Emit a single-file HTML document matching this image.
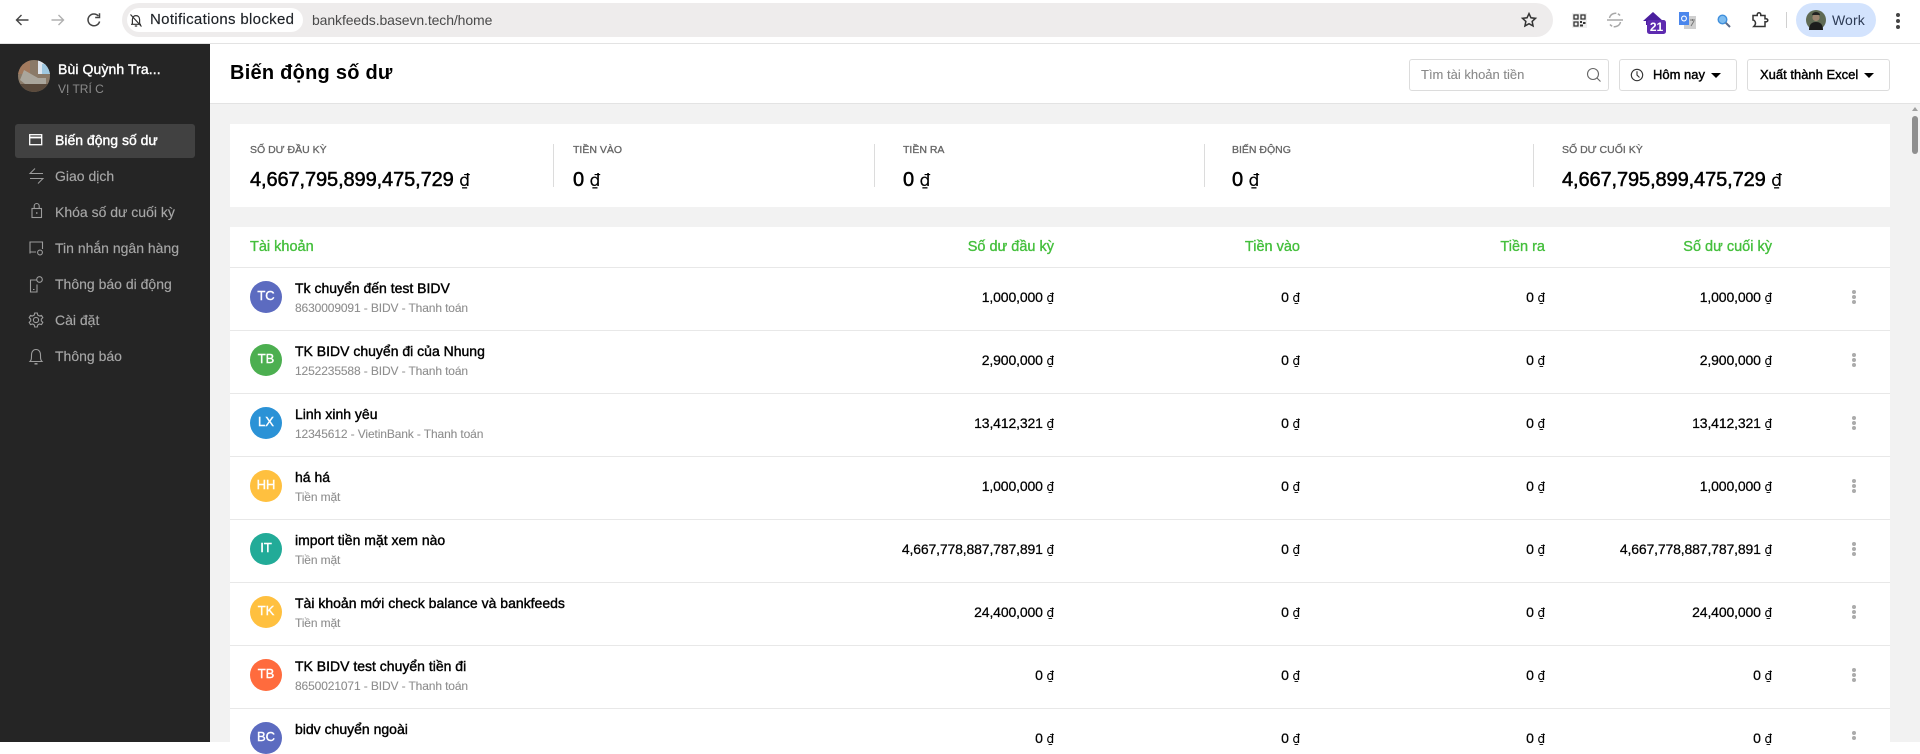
<!DOCTYPE html>
<html lang="vi"><head><meta charset="utf-8"><title>Biến động số dư</title>
<style>
*{box-sizing:border-box;margin:0;padding:0}
html,body{width:1920px;height:742px;overflow:hidden;background:#fff;font-family:"Liberation Sans",Arial,sans-serif;color:#000}
.a{position:absolute;white-space:nowrap}
svg{position:absolute;overflow:visible}
.m{-webkit-text-stroke:.4px currentColor}
i{font-style:normal;font-family:"DejaVu Sans",sans-serif;font-size:.86em;-webkit-text-stroke:.1px currentColor}
.nav{left:55px;font-size:14px;line-height:20px;color:#a6a6a6;-webkit-text-stroke:.15px #a6a6a6}
.lbl{font-size:10.5px;line-height:14px;color:#666;-webkit-text-stroke:.3px #666;top:143px}
.val{font-size:20px;line-height:28px;top:166px;letter-spacing:-.1px;-webkit-text-stroke:.5px #000}
.sep{position:absolute;top:144px;width:1px;height:43px;background:#dcdcdc}
.th{top:237px;font-size:14.5px;line-height:20px;color:#44bf3c;-webkit-text-stroke:.35px #44bf3c}
.row{position:absolute;left:230px;width:1660px;height:1px;background:#e8e8e8}
.av{position:absolute;left:250px;width:32px;height:32px;border-radius:50%;color:#fff;font-size:13px;line-height:30px;text-align:center;-webkit-text-stroke:.4px #fff}
.nm{left:295px;font-size:14px;line-height:20px;-webkit-text-stroke:.4px #000}
.sb{left:295px;font-size:12px;line-height:16px;color:#8e8e8e;letter-spacing:-.12px;-webkit-text-stroke:.1px #8e8e8e}
.v{font-size:14px;line-height:20px;letter-spacing:-.15px;-webkit-text-stroke:.25px #000}
.dot{position:absolute;left:1852px;width:4px;height:4px;border-radius:50%;background:#ababab}
.btn{position:absolute;top:59px;height:32px;border:1px solid #dcdcdc;border-radius:3px;background:#fff}
.car{position:absolute;width:0;height:0;border-left:5px solid transparent;border-right:5px solid transparent;border-top:5px solid #000}
</style></head><body>

<!-- Browser chrome -->
<div class="a" style="left:0;top:0;width:1920px;height:43px;background:#fff"></div>
<div class="a" style="left:0;top:43px;width:1920px;height:1px;background:#e3e3e3"></div>
<svg style="left:14px;top:12px" width="16" height="16" fill="none" stroke="#444" stroke-width="1.4"><path d="M14.500 8H2.500M7.500 3 2.500 8l5 5"/></svg>
<svg style="left:50px;top:12px" width="16" height="16" fill="none" stroke="#b0b0b0" stroke-width="1.4"><path d="M1.500 8h12M8.500 3l5 5-5 5"/></svg>
<svg style="left:86px;top:12px" width="16" height="16" fill="none" stroke="#444" stroke-width="1.5"><path d="M13.600 9.500A5.900 5.900 0 1 1 12.400 4"/><path d="M13.500 1.200v4.300H9.200" /></svg>
<div class="a" style="left:122px;top:3px;width:1431px;height:34px;border-radius:17px;background:#eeecec"></div>
<div class="a" style="left:127px;top:8px;width:176px;height:24px;border-radius:12px;background:#fff"></div>
<svg style="left:129px;top:13px" width="14" height="15" fill="none" stroke="#333" stroke-width="1.2"><path d="M3.400 11V6.500C3.400 4 5 2.600 7 2.600s3.600 1.400 3.600 3.900V11M2 11.300h10M5.800 13h2.400M1.500 1.500l11 12"/></svg>
<div class="a" style="left:150px;top:10px;font-size:15px;line-height:20px;color:#1f2328;letter-spacing:.32px;-webkit-text-stroke:.15px #1f2328">Notifications blocked</div>
<div class="a" style="left:312px;top:10px;font-size:14px;line-height:20px;color:#4a4a4a;letter-spacing:-.1px">bankfeeds.basevn.tech/home</div>
<svg style="left:1521px;top:12px" width="16" height="16" fill="none" stroke="#333" stroke-width="1.5"><path d="M8 1.600l1.950 4.200 4.550.55-3.350 3.100.9 4.500L8 11.700l-4.050 2.250.9-4.500L1.500 6.350l4.550-.55z"/></svg>
<!-- extensions -->
<svg style="left:1572px;top:13px" width="15" height="15"><rect width="15" height="15" fill="#efefef"/><path d="M2 2h4v4H2zM9 2h4v4H9zM2 9h4v4H2z" fill="none" stroke="#333" stroke-width="1.3"/><path d="M8 8h2v2H8zM11 9h2.500v2H11zM8 11.500h3V13.500H8z" fill="#333"/></svg>
<svg style="left:1607px;top:12px" width="16" height="16" fill="none" stroke="#a8a8a8" stroke-width="1.5"><path d="M2.500 6A6 6 0 0 1 13 3.500M13.500 10A6 6 0 0 1 3 12.500" stroke-dasharray="9 1.500"/><path d="M0 8h16"/></svg>
<svg style="left:1643px;top:12px" width="23" height="22"><path d="M0 9 10 0l10 9h-3v4H3V9z" fill="#4a1f9e"/><rect x="4" y="8" width="19" height="14" rx="2.500" fill="#5e2bb0"/></svg>
<div class="a" style="left:1647px;top:20px;width:19px;text-align:center;color:#fff;font-size:12px;line-height:14px;font-weight:bold">21</div>
<svg style="left:1679px;top:12px" width="17" height="17"><rect x="5" y="4" width="12" height="13" fill="#cfcfcf"/><rect width="10" height="13" fill="#4a86ec"/><circle cx="5" cy="6.500" r="2.400" fill="none" stroke="#fff" stroke-width="1.1"/><path d="M11 8h5M13.500 7v2M12 14l3-5" stroke="#777" fill="none"/></svg>
<svg style="left:1717px;top:14px" width="14" height="14"><circle cx="5.500" cy="5.500" r="4.300" fill="#7fbdf0" stroke="#3f8fdc" stroke-width="1.4"/><path d="M8.800 8.800l4.200 4.200" stroke="#5a6a88" stroke-width="2"/></svg>
<svg style="left:1752px;top:12px" width="17" height="16" fill="none" stroke="#333" stroke-width="1.5"><path d="M1 3.500h4.200C5 1.500 6 .8 7 .8s2 .7 1.800 2.700h4.200v3.300c1.800-.3 2.800.5 2.800 1.500s-1 1.800-2.800 1.500v4.700H1.800c1.100-1.100 1.700-2 1.700-3.300S2.500 8 1 8z"/></svg>
<div class="a" style="left:1786px;top:12px;width:1px;height:16px;background:#d0d0d0"></div>
<div class="a" style="left:1796px;top:3px;width:80px;height:34px;border-radius:17px;background:#d3e3fd"></div>
<svg style="left:1806px;top:10px" width="20" height="20"><circle cx="10" cy="10" r="10" fill="#5f6a54"/><circle cx="10" cy="7.500" r="3.600" fill="#9c8470"/><path d="M6 5a4 3 0 0 1 8 0z" fill="#222"/><path d="M3 20c0-6 3-8 7-8s7 2 7 8z" fill="#1c1c1c"/></svg>
<div class="a" style="left:1832px;top:10px;font-size:14px;line-height:20px;color:#2d3b55;letter-spacing:.1px">Work</div>
<div class="dot" style="left:1896px;top:13px;background:#444"></div><div class="dot" style="left:1896px;top:19px;background:#444"></div><div class="dot" style="left:1896px;top:25px;background:#444"></div>

<!-- Sidebar -->
<div class="a" style="left:0;top:44px;width:210px;height:698px;background:#252525"></div>
<svg style="left:18px;top:60px" width="32" height="32"><defs><clipPath id="c"><circle cx="16" cy="16" r="16"/></clipPath></defs><g clip-path="url(#c)"><rect width="32" height="32" fill="#8a7a68"/><rect x="20" y="0" width="12" height="14" fill="#dfe6ee"/><rect x="24" y="4" width="8" height="10" fill="#9fc8e0"/><rect x="0" y="0" width="12" height="14" fill="#a27a5e"/><path d="M6 10l14 8 8 0 0 6-16 4-10-8z" fill="#aaa69c"/><rect x="0" y="24" width="32" height="8" fill="#5a4a3c"/></g></svg>
<div class="a m" style="left:58px;top:59px;font-size:14px;line-height:20px;color:#fff;letter-spacing:.1px">Bùi Quỳnh Tra...</div>
<div class="a" style="left:58px;top:81px;font-size:12px;line-height:16px;color:#8b8b8b">VỊ TRÍ C</div>

<div class="a" style="left:15px;top:124px;width:180px;height:34px;border-radius:3px;background:#414141"></div>
<svg style="left:29px;top:134px" width="15" height="12" fill="none" stroke="#fff" stroke-width="1.3"><rect x=".7" y=".7" width="12" height="10"/><path d="M.7 3.500h12" stroke-width="1.8"/></svg>
<div class="a nav m" style="top:130px;color:#fff;-webkit-text-stroke:.4px #fff">Biến động số dư</div>
<svg style="left:29px;top:167px" width="15" height="18" fill="none" stroke="#9c9c9c" stroke-width="1"><path d="M14 6.500H1L6 1.500M1 11.500h13l-5 5"/></svg>
<div class="a nav" style="top:166px">Giao dịch</div>
<svg style="left:31px;top:202px" width="12" height="17" fill="none" stroke="#9c9c9c" stroke-width="1.1"><rect x="1" y="6.500" width="9.500" height="9"/><path d="M3.200 6.500V4a2.500 2.500 0 0 1 5 0v2.500"/><path d="M5.800 10v2"/></svg>
<div class="a nav" style="top:202px">Khóa số dư cuối kỳ</div>
<svg style="left:29px;top:241px" width="15" height="15" fill="none" stroke="#9c9c9c" stroke-width="1.1"><path d="M1 12.500V1h12.500v7M1 11h6"/><circle cx="11" cy="11.500" r="2.400"/></svg>
<div class="a nav" style="top:238px">Tin nhắn ngân hàng</div>
<svg style="left:29px;top:276px" width="15" height="17" fill="none" stroke="#9c9c9c" stroke-width="1.1"><path d="M8 4H1.500v12H8V8.500M4 13.500h1.500"/><circle cx="10.500" cy="3.500" r="2.800"/></svg>
<div class="a nav" style="top:274px">Thông báo di động</div>
<svg style="left:28px;top:312px" width="16" height="16" fill="none" stroke="#9c9c9c" stroke-width="1.1"><path d="M6.700 1h2.600l.4 2 1.800 1 2-.6 1.300 2.300-1.500 1.400v1.800l1.500 1.400-1.300 2.300-2-.6-1.800 1-.4 2H6.700l-.4-2-1.800-1-2 .6L1.200 10.300l1.500-1.400V7.100L1.200 5.700 2.500 3.400l2 .6 1.800-1z"/><circle cx="8" cy="8" r="2.600"/></svg>
<div class="a nav" style="top:310px">Cài đặt</div>
<svg style="left:29px;top:348px" width="14" height="17" fill="none" stroke="#9c9c9c" stroke-width="1.1"><path d="M1 13.500c1.500-1.500 1.500-3 1.500-6.500C2.500 3.500 4.500 1.500 7 1.500s4.500 2 4.500 5.500c0 3.500 0 5 1.500 6.500z"/><path d="M5.500 15.800h3" stroke-width="1.5"/></svg>
<div class="a nav" style="top:346px">Thông báo</div>

<!-- Header -->
<div class="a" style="left:210px;top:44px;width:1710px;height:59px;background:#fff"></div>
<div class="a" style="left:210px;top:103px;width:1710px;height:1px;background:#e3e3e3"></div>
<div class="a" style="left:230px;top:59px;font-size:20px;line-height:28px;font-weight:bold;letter-spacing:.25px">Biến động số dư</div>
<div class="btn" style="left:1409px;width:200px"></div>
<div class="a" style="left:1421px;top:65px;font-size:13px;line-height:20px;color:#8a8a8a;-webkit-text-stroke:.1px #8a8a8a">Tìm tài khoản tiền</div>
<svg style="left:1586px;top:67px" width="16" height="16" fill="none" stroke="#666" stroke-width="1.1"><circle cx="7" cy="7" r="5.500"/><path d="M11 11l3.500 3.500"/></svg>
<div class="btn" style="left:1619px;width:118px"></div>
<svg style="left:1630px;top:68px" width="14" height="14" fill="none" stroke="#333" stroke-width="1.1"><circle cx="7" cy="7" r="5.700"/><path d="M7 3.200V7l2.500 2.500"/></svg>
<div class="a m" style="left:1653px;top:65px;font-size:13px;line-height:20px">Hôm nay</div>
<div class="car" style="left:1711px;top:73px"></div>
<div class="btn" style="left:1747px;width:143px"></div>
<div class="a m" style="left:1760px;top:65px;font-size:13px;line-height:20px">Xuất thành Excel</div>
<div class="car" style="left:1864px;top:73px"></div>

<!-- Content bg -->
<div class="a" style="left:210px;top:104px;width:1710px;height:638px;background:#f2f2f2"></div>
<!-- scrollbar -->
<div class="a" style="left:1912px;top:107px;width:0;height:0;border-left:3px solid transparent;border-right:3px solid transparent;border-bottom:4px solid #a0a0a0;margin-left:0"></div>
<div class="a" style="left:1912px;top:116px;width:6px;height:38px;border-radius:3px;background:#8f8f8f"></div>

<!-- Summary card -->
<div class="a" style="left:230px;top:124px;width:1660px;height:83px;background:#fff"></div>
<div class="sep" style="left:553px"></div><div class="sep" style="left:874px"></div><div class="sep" style="left:1204px"></div><div class="sep" style="left:1533px"></div>
<div class="a lbl" style="left:250px">SỐ DƯ ĐẦU KỲ</div>
<div class="a val" style="left:250px">4,667,795,899,475,729 <i>₫</i></div>
<div class="a lbl" style="left:573px">TIỀN VÀO</div>
<div class="a val" style="left:573px">0 <i>₫</i></div>
<div class="a lbl" style="left:903px">TIỀN RA</div>
<div class="a val" style="left:903px">0 <i>₫</i></div>
<div class="a lbl" style="left:1232px">BIẾN ĐỘNG</div>
<div class="a val" style="left:1232px">0 <i>₫</i></div>
<div class="a lbl" style="left:1562px">SỐ DƯ CUỐI KỲ</div>
<div class="a val" style="left:1562px">4,667,795,899,475,729 <i>₫</i></div>

<!-- Table card -->
<div class="a" style="left:230px;top:227px;width:1660px;height:515px;background:#fff"></div>
<div class="a th" style="left:250px">Tài khoản</div>
<div class="a th" style="right:866px">Số dư đầu kỳ</div>
<div class="a th" style="right:620px">Tiền vào</div>
<div class="a th" style="right:375px">Tiền ra</div>
<div class="a th" style="right:148px">Số dư cuối kỳ</div>
<div class="row" style="top:267px"></div><div class="row" style="top:330px"></div><div class="row" style="top:393px"></div><div class="row" style="top:456px"></div><div class="row" style="top:519px"></div><div class="row" style="top:582px"></div><div class="row" style="top:645px"></div><div class="row" style="top:708px"></div>

<!-- Row 1 -->
<div class="av" style="top:281px;background:#5c6bc0">TC</div>
<div class="a nm" style="top:278px">Tk chuyển đến test BIDV</div>
<div class="a sb" style="top:300px">8630009091 - BIDV - Thanh toán</div>
<div class="a v" style="right:866px;top:287px">1,000,000 <i>₫</i></div><div class="a v" style="right:620px;top:287px">0 <i>₫</i></div><div class="a v" style="right:375px;top:287px">0 <i>₫</i></div><div class="a v" style="right:148px;top:287px">1,000,000 <i>₫</i></div>
<div class="dot" style="top:290px"></div><div class="dot" style="top:295px"></div><div class="dot" style="top:300px"></div>
<!-- Row 2 -->
<div class="av" style="top:344px;background:#4caf50">TB</div>
<div class="a nm" style="top:341px">TK BIDV chuyển đi của Nhung</div>
<div class="a sb" style="top:363px">1252235588 - BIDV - Thanh toán</div>
<div class="a v" style="right:866px;top:350px">2,900,000 <i>₫</i></div><div class="a v" style="right:620px;top:350px">0 <i>₫</i></div><div class="a v" style="right:375px;top:350px">0 <i>₫</i></div><div class="a v" style="right:148px;top:350px">2,900,000 <i>₫</i></div>
<div class="dot" style="top:353px"></div><div class="dot" style="top:358px"></div><div class="dot" style="top:363px"></div>
<!-- Row 3 -->
<div class="av" style="top:407px;background:#2b92d6">LX</div>
<div class="a nm" style="top:404px">Linh xinh yêu</div>
<div class="a sb" style="top:426px">12345612 - VietinBank - Thanh toán</div>
<div class="a v" style="right:866px;top:413px">13,412,321 <i>₫</i></div><div class="a v" style="right:620px;top:413px">0 <i>₫</i></div><div class="a v" style="right:375px;top:413px">0 <i>₫</i></div><div class="a v" style="right:148px;top:413px">13,412,321 <i>₫</i></div>
<div class="dot" style="top:416px"></div><div class="dot" style="top:421px"></div><div class="dot" style="top:426px"></div>
<!-- Row 4 -->
<div class="av" style="top:470px;background:#ffc03f">HH</div>
<div class="a nm" style="top:467px">há há</div>
<div class="a sb" style="top:489px">Tiền mặt</div>
<div class="a v" style="right:866px;top:476px">1,000,000 <i>₫</i></div><div class="a v" style="right:620px;top:476px">0 <i>₫</i></div><div class="a v" style="right:375px;top:476px">0 <i>₫</i></div><div class="a v" style="right:148px;top:476px">1,000,000 <i>₫</i></div>
<div class="dot" style="top:479px"></div><div class="dot" style="top:484px"></div><div class="dot" style="top:489px"></div>
<!-- Row 5 -->
<div class="av" style="top:533px;background:#22ab98">IT</div>
<div class="a nm" style="top:530px">import tiền mặt xem nào</div>
<div class="a sb" style="top:552px">Tiền mặt</div>
<div class="a v" style="right:866px;top:539px">4,667,778,887,787,891 <i>₫</i></div><div class="a v" style="right:620px;top:539px">0 <i>₫</i></div><div class="a v" style="right:375px;top:539px">0 <i>₫</i></div><div class="a v" style="right:148px;top:539px">4,667,778,887,787,891 <i>₫</i></div>
<div class="dot" style="top:542px"></div><div class="dot" style="top:547px"></div><div class="dot" style="top:552px"></div>
<!-- Row 6 -->
<div class="av" style="top:596px;background:#ffc03f">TK</div>
<div class="a nm" style="top:593px">Tài khoản mới check balance và bankfeeds</div>
<div class="a sb" style="top:615px">Tiền mặt</div>
<div class="a v" style="right:866px;top:602px">24,400,000 <i>₫</i></div><div class="a v" style="right:620px;top:602px">0 <i>₫</i></div><div class="a v" style="right:375px;top:602px">0 <i>₫</i></div><div class="a v" style="right:148px;top:602px">24,400,000 <i>₫</i></div>
<div class="dot" style="top:605px"></div><div class="dot" style="top:610px"></div><div class="dot" style="top:615px"></div>
<!-- Row 7 -->
<div class="av" style="top:659px;background:#ff6b3d">TB</div>
<div class="a nm" style="top:656px">TK BIDV test chuyển tiền đi</div>
<div class="a sb" style="top:678px">8650021071 - BIDV - Thanh toán</div>
<div class="a v" style="right:866px;top:665px">0 <i>₫</i></div><div class="a v" style="right:620px;top:665px">0 <i>₫</i></div><div class="a v" style="right:375px;top:665px">0 <i>₫</i></div><div class="a v" style="right:148px;top:665px">0 <i>₫</i></div>
<div class="dot" style="top:668px"></div><div class="dot" style="top:673px"></div><div class="dot" style="top:678px"></div>
<!-- Row 8 -->
<div class="av" style="top:722px;background:#5c6bc0">BC</div>
<div class="a nm" style="top:719px">bidv chuyển ngoài</div>
<div class="a v" style="right:866px;top:728px">0 <i>₫</i></div><div class="a v" style="right:620px;top:728px">0 <i>₫</i></div><div class="a v" style="right:375px;top:728px">0 <i>₫</i></div><div class="a v" style="right:148px;top:728px">0 <i>₫</i></div>
<div class="dot" style="top:731px"></div><div class="dot" style="top:736px"></div>
</body></html>
